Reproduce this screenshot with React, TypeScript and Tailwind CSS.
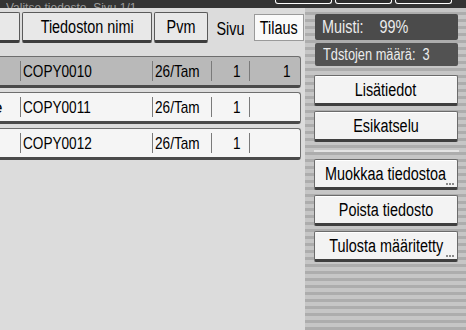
import React from 'react';

const font = { fontFamily: '"Liberation Sans", Arial, sans-serif' };

// narrow text: the panel uses a condensed face, squeeze Liberation Sans
function N({ children, left }: { children: React.ReactNode; left?: boolean }) {
  return (
    <span className={'inline-block whitespace-nowrap scale-x-[0.8] ' + (left ? 'origin-left' : 'origin-center')}>
      {children}
    </span>
  );
}

function SideButton({ label, more }: { label: string; more?: boolean }) {
  return (
    <div className="relative flex h-[31px] w-[144px] items-center justify-center rounded-[2px] border border-[#6b6b6b] border-b-[3px] border-b-[#3f3f3f] bg-[#f3f3f3] text-[18px] leading-none text-black shadow-[inset_0_1px_0_#ffffff]">
      <N>{label}</N>
      {more && (
        <div className="absolute bottom-[2px] right-[3px] flex gap-[1px]">
          <div className="h-[2px] w-[2px] bg-[#8a8a8a]" />
          <div className="h-[2px] w-[2px] bg-[#8a8a8a]" />
          <div className="h-[2px] w-[2px] bg-[#8a8a8a]" />
        </div>
      )}
    </div>
  );
}

function Row({ name, selected, order, lead }: { name: string; selected?: boolean; order?: string; lead?: string }) {
  return (
    <div
      className={
        'flex h-[32px] w-[301px] items-center rounded-r-[3px] border border-l-0 border-[#6e6e6e] border-b-[3px] border-b-[#4a4a4a] text-[17px] leading-none text-black ' +
        (selected ? 'bg-[#b9b9b9]' : 'bg-[#f5f5f5]')
      }
    >
      <div className="flex w-[20px] justify-start">
        {lead && <span className="-ml-[7px]">{lead}</span>}
      </div>
      <div className="h-[20px] w-px bg-[#7a7a7a]" />
      <div className="w-[131px] pl-[2px]"><N left>{name}</N></div>
      <div className="h-[20px] w-px bg-[#7a7a7a]" />
      <div className="w-[58px] pl-[2px]"><N left>26/Tam</N></div>
      <div className="h-[20px] w-px bg-[#7a7a7a]" />
      <div className="w-[37px] pr-[8px] text-right"><N>1</N></div>
      <div className="h-[20px] w-px bg-[#7a7a7a]" />
      <div className="flex-1 pr-[9px] text-right">{order && <N>{order}</N>}</div>
    </div>
  );
}

export default function App() {
  return (
    <div className="flex h-[330px] w-[466px] flex-col overflow-hidden bg-[#dcdcdc]" style={font}>
      {/* top strip */}
      <div className="flex h-[8px] shrink-0 items-end overflow-hidden bg-[#343434]">
        <div className="mb-[-7px] ml-[6px] w-[260px] overflow-hidden whitespace-nowrap text-[12px] leading-[14px] text-[#9c9c9c]">
          Valitse tiedosto. Sivu 1/1
        </div>
        <div className="ml-[9px] flex gap-[3px] self-start">
          <div className="h-[4px] w-[57px] rounded-b-[3px] border-x border-b border-white bg-[#2c2c2c]" />
          <div className="h-[4px] w-[57px] rounded-b-[3px] border-x border-b border-white bg-[#2c2c2c]" />
          <div className="h-[4px] w-[57px] rounded-b-[3px] border-x border-b border-white bg-[#2c2c2c]" />
        </div>
      </div>

      <div className="flex flex-1">
        {/* file list */}
        <div className="flex w-[305px] flex-col">
          <div className="mt-[4px] flex h-[31px] items-center gap-[2px]">
            <div className="h-[31px] w-[20px] rounded-r-[2px] border border-l-0 border-[#5a5a5a] border-b-[3px] border-b-[#3c3c3c] bg-[#e8e8e8]" />
            <div className="flex h-[31px] w-[130px] items-center justify-center rounded-[2px] border border-[#5a5a5a] border-b-[3px] border-b-[#3c3c3c] bg-[#e8e8e8] text-[18px] leading-none text-black">
              <N>Tiedoston nimi</N>
            </div>
            <div className="flex h-[31px] w-[54px] items-center justify-center rounded-[2px] border border-[#5a5a5a] border-b-[3px] border-b-[#3c3c3c] bg-[#e8e8e8] text-[18px] leading-none text-black">
              <N>Pvm</N>
            </div>
            <div className="w-[42px] pt-[2px] text-center text-[18px] leading-none text-black"><N>Sivu</N></div>
            <div className="flex h-[27px] w-[50px] items-center justify-center border border-[#9a9a9a] bg-[#fafafa] text-[18px] leading-none text-black">
              <N>Tilaus</N>
            </div>
          </div>

          <div className="mt-[13px] flex flex-col gap-[4px]">
            <Row name="COPY0010" selected order="1" />
            <Row name="COPY0011" lead="e" />
            <Row name="COPY0012" />
          </div>
        </div>

        {/* side panel */}
        <div className="flex flex-1 flex-col items-center bg-[repeating-linear-gradient(to_bottom,#c6c6c6_0px,#c6c6c6_4px,#adadad_4px,#adadad_7px)] pl-[1px]">
          <div className="mt-[6px] flex h-[26px] w-[143px] items-center rounded-[2px] bg-[#4b4b4b] px-[7px] text-[18px] leading-none text-[#ececec]">
            <N left>Muisti:&nbsp;&nbsp;&nbsp;&nbsp;99%</N>
          </div>
          <div className="mt-[3px] flex h-[23px] w-[143px] items-center rounded-[2px] bg-[#525252] px-[8px] text-[16px] leading-none text-[#ececec]">
            <N left>Tdstojen määrä:&nbsp; 3</N>
          </div>
          <div className="mt-[9px] flex flex-col gap-[5px]">
            <SideButton label="Lisätiedot" />
            <SideButton label="Esikatselu" />
          </div>
          <div className="mt-[8px] h-[2px] w-[145px] bg-[#e4e4e4]" />
          <div className="mt-[7px] flex flex-col gap-[5px]">
            <SideButton label="Muokkaa tiedostoa" more />
            <SideButton label="Poista tiedosto" />
            <SideButton label="Tulosta määritetty" more />
          </div>
        </div>
      </div>
    </div>
  );
}
